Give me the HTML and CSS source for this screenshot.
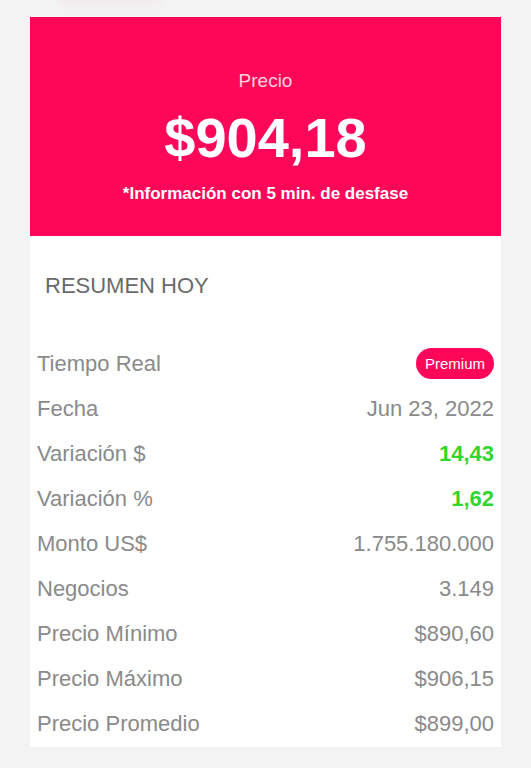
FILE: index.html
```html
<!DOCTYPE html>
<html lang="es">
<head>
    <meta charset="UTF-8">
    <meta name="viewport" content="width=device-width, initial-scale=1.0">
    <title>Resumen Hoy</title>
    <link rel="stylesheet" href="styles.css">
</head>
<body>
    <div class="ghost"></div>
    <div class="card">
        <div class="price-box">
            <p class="price-label">Precio</p>
            <p class="price-value">$904,18</p>
            <p class="price-note">*Información con 5 min. de desfase</p>
        </div>

        <h2 class="summary-title">RESUMEN HOY</h2>

        <div class="rows">
            <div class="row">
                <span class="label">Tiempo Real</span>
                <span class="badge">Premium</span>
            </div>
            <div class="row">
                <span class="label">Fecha</span>
                <span class="value">Jun 23, 2022</span>
            </div>
            <div class="row">
                <span class="label">Variación $</span>
                <span class="value up">14,43</span>
            </div>
            <div class="row">
                <span class="label">Variación %</span>
                <span class="value up">1,62</span>
            </div>
            <div class="row">
                <span class="label">Monto US$</span>
                <span class="value">1.755.180.000</span>
            </div>
            <div class="row">
                <span class="label">Negocios</span>
                <span class="value">3.149</span>
            </div>
            <div class="row">
                <span class="label">Precio Mínimo</span>
                <span class="value">$890,60</span>
            </div>
            <div class="row">
                <span class="label">Precio Máximo</span>
                <span class="value">$906,15</span>
            </div>
            <div class="row">
                <span class="label">Precio Promedio</span>
                <span class="value">$899,00</span>
            </div>
        </div>
    </div>
</body>
</html>
```

FILE: styles.css
```css
body {
    font-family: "Liberation Sans", Arial, sans-serif;
    background: #f3f3f3;
    margin: 0;
    padding: 0 30px;
    overflow: hidden;
}
.ghost {
    height: 17px;
    margin: 0 340px 0 30px;
    background: linear-gradient(to bottom, rgba(255, 200, 215, 0.35), rgba(243, 243, 243, 0) 6px);
    filter: blur(2px);
}
.card {
    background: white;
}
.price-box {
    background: #ff0759;
    color: white;
    text-align: center;
    height: 219px;
    box-sizing: border-box;
    padding-top: 53px;
}
.price-box p {
    margin: 0;
}
.price-label {
    font-size: 19px;
    line-height: 22px;
    color: rgba(255, 255, 255, 0.82);
}
.price-value {
    font-size: 56px;
    font-weight: bold;
    line-height: 64px;
    margin-top: 14px !important;
}
.price-note {
    font-size: 17px;
    font-weight: bold;
    line-height: 20px;
    margin-top: 14px !important;
}
.summary-title {
    margin: 0;
    padding: 37px 15px 42px;
    font-size: 22px;
    line-height: 26px;
    font-weight: normal;
    color: #6a6a6a;
}
.row {
    display: flex;
    justify-content: space-between;
    align-items: center;
    height: 45.1px;
    padding: 0 7px;
    font-size: 22px;
    color: #8a8a8a;
}
.value.up {
    color: #30d630;
    font-weight: bold;
}
.badge {
    background: #ff0759;
    color: white;
    font-size: 15px;
    line-height: 31px;
    padding: 0 9px;
    border-radius: 16px;
}
```
